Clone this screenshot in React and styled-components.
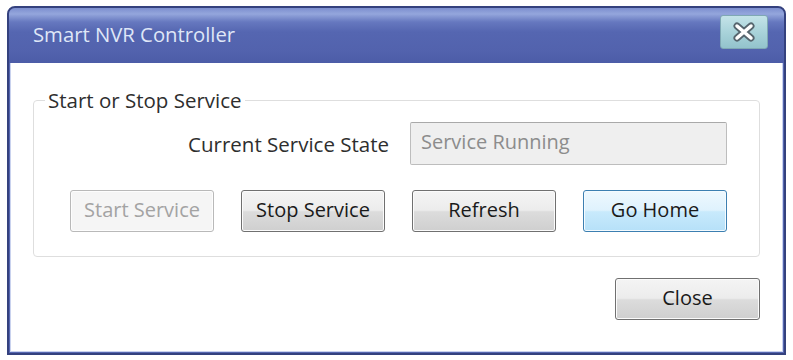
import React from 'react';
import styled, { createGlobalStyle } from 'styled-components';

const GlobalStyle = createGlobalStyle`
	html, body {
		margin: 0;
		padding: 0;
		background: #ffffff;
	}
	body {
		font-family: "Open Sans", "Noto Sans", sans-serif;
	}
`;

const Window = styled.div`
	box-sizing: border-box;
	width: 779px;
	height: 349px;
	margin: 6px 0 0 7px;
	border: 2px solid #34417e;
	border-radius: 8px 8px 0 0;
	background: #5566b0;
	display: flex;
	flex-direction: column;
	overflow: hidden;
`;

const TitleBar = styled.div`
	height: 55px;
	flex: none;
	display: flex;
	align-items: center;
	justify-content: space-between;
	padding: 0 16px 0 24px;
	background: linear-gradient(
		to bottom,
		#7d8fcf 0px,
		#94a6dc 6px,
		#6678bf 14px,
		#5566b1 24px,
		#5262ad 44px,
		#4c5ca7 55px
	);
`;

const Title = styled.span`
	color: #dfe6f7;
	font-size: 20.3px;
	margin-top: -3px;
`;

const CloseX = styled.button`
	width: 48px;
	height: 34px;
	margin-top: -8px;
	padding: 0;
	border: 1px solid #7fa8b4;
	border-radius: 3px;
	background: linear-gradient(to bottom, #c4e3e8 0%, #a9d3da 50%, #93c3cc 100%);
	display: flex;
	align-items: center;
	justify-content: center;
`;

const Client = styled.div`
	flex: 1;
	background: #ffffff;
	margin: 0 1px 1px 1px;
	box-shadow: inset 1px 0 0 #c9d2ee, inset -1px 0 0 #c9d2ee, inset 0 -1px 0 #c9d2ee;
	padding: 25px 23px 0 23px;
	display: flex;
	flex-direction: column;
`;

const GroupBox = styled.fieldset`
	margin: 0;
	padding: 0;
	border: 1px solid #dedede;
	border-radius: 4px;
	min-width: 0;
`;

const Legend = styled.legend`
	margin-left: 11px;
	padding: 0 3px;
	font-size: 20.5px;
	line-height: 24px;
	color: #2e2e2e;
`;

const GroupBody = styled.div`
	padding: 0 32px 24px 36px;
`;

const Row = styled.div`
	display: flex;
	align-items: center;
	justify-content: ${p => p.$justify || 'flex-end'};
	gap: ${p => p.$gap || 0}px;
	margin-top: ${p => p.$top || 0}px;
`;

const Label = styled.span`
	font-size: 20.5px;
	color: #2e2e2e;
	margin-right: 21px;
`;

const StateField = styled.div`
	box-sizing: border-box;
	width: 317px;
	height: 43px;
	padding: 0 10px 5px;
	display: flex;
	align-items: center;
	border: 1px solid #bdbdbd;
	border-top-color: #a9a9a9;
	border-radius: 2px;
	background: #efefef;
	color: #8c8c8c;
	font-size: 20px;
`;

const variants = {
	normal: `
		border-color: #707070;
		color: #1a1a1a;
		background: linear-gradient(to bottom, #f4f4f4 0%, #ececec 48%, #dcdcdc 52%, #cfcfcf 100%);
		box-shadow: inset 0 0 0 1px #fbfbfb;
	`,
	disabled: `
		border-color: #b9b9b9;
		color: #a3a3a3;
		background: #f5f5f5;
		box-shadow: inset 0 0 0 1px #fdfdfd;
	`,
	focused: `
		border-color: #3c7fb1;
		color: #1a1a1a;
		background: linear-gradient(to bottom, #eef8fe 0%, #dff2fd 48%, #c8eafc 52%, #b6e0f8 100%);
		box-shadow: inset 0 0 0 1px #f4fbff;
	`,
};

const Button = styled.button`
	box-sizing: border-box;
	width: ${p => p.$width || 144}px;
	height: 42px;
	padding: 0 0 4px;
	border: 1px solid;
	border-radius: 3px;
	font-family: "Open Sans", "Noto Sans", sans-serif;
	font-size: 20px;
	${p => variants[p.$variant || 'normal']}
`;

const Footer = styled.div`
	display: flex;
	justify-content: flex-end;
	margin-top: 21px;
`;

function CloseGlyph() {
	return (
		<svg width="24" height="20" viewBox="0 0 24 20">
			<path d="M5 4 L19 16 M19 4 L5 16" stroke="#56656e" strokeWidth="7" strokeLinecap="round" />
			<path d="M5 4 L19 16 M19 4 L5 16" stroke="#ffffff" strokeWidth="3.5" strokeLinecap="round" />
		</svg>
	);
}

export default function App() {
	return (
		<>
			<GlobalStyle />
			<Window>
				<TitleBar>
					<Title>Smart NVR Controller</Title>
					<CloseX aria-label="Close">
						<CloseGlyph />
					</CloseX>
				</TitleBar>
				<Client>
					<GroupBox>
						<Legend>Start or Stop Service</Legend>
						<GroupBody>
							<Row $top={10}>
								<Label>Current Service State</Label>
								<StateField>Service Running</StateField>
							</Row>
							<Row $top={25} $justify="flex-start" $gap={27}>
								<Button $variant="disabled" disabled>Start Service</Button>
								<Button>Stop Service</Button>
								<Button>Refresh</Button>
								<Button $variant="focused">Go Home</Button>
							</Row>
						</GroupBody>
					</GroupBox>
					<Footer>
						<Button $width={145}>Close</Button>
					</Footer>
				</Client>
			</Window>
		</>
	);
}
